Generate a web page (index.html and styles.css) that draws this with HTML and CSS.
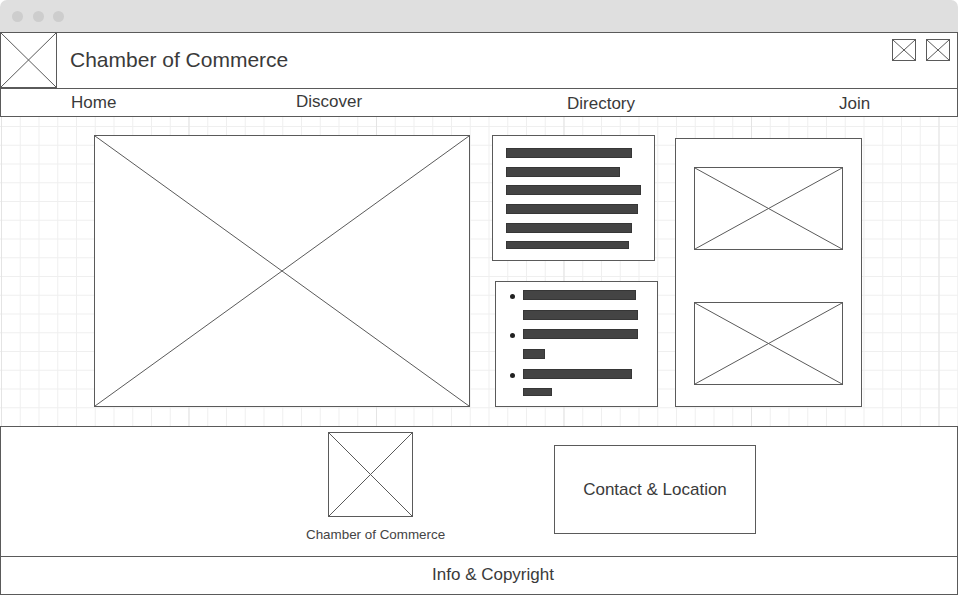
FILE: index.html
```html
<!DOCTYPE html>
<html lang="en">
<head>
    <meta charset="UTF-8">
    <meta name="viewport" content="width=device-width, initial-scale=1.0">
    <link rel="stylesheet" href="styles.css">
    <title>Chamber of Commerce - Wireframe</title>
</head>
<body>
    <div class="window">
        <div class="chrome">
            <span class="dot"></span>
            <span class="dot"></span>
            <span class="dot"></span>
        </div>

        <header class="header">
            <div class="ph-box logo">
                <svg class="ph" viewBox="0 0 100 100" preserveAspectRatio="none"><line x1="0" y1="0" x2="100" y2="100"/><line x1="0" y1="100" x2="100" y2="0"/></svg>
            </div>
            <h1 class="title">Chamber of Commerce</h1>
            <div class="header-icons">
                <div class="ph-box icon">
                    <svg class="ph" viewBox="0 0 100 100" preserveAspectRatio="none"><line x1="0" y1="0" x2="100" y2="100"/><line x1="0" y1="100" x2="100" y2="0"/></svg>
                </div>
                <div class="ph-box icon">
                    <svg class="ph" viewBox="0 0 100 100" preserveAspectRatio="none"><line x1="0" y1="0" x2="100" y2="100"/><line x1="0" y1="100" x2="100" y2="0"/></svg>
                </div>
            </div>
        </header>

        <nav class="nav">
            <a class="nav-item">Home</a>
            <a class="nav-item nav-item--high">Discover</a>
            <a class="nav-item nav-item--low">Directory</a>
            <a class="nav-item nav-item--low">Join</a>
        </nav>

        <main class="main">
            <div class="ph-box hero">
                <svg class="ph" viewBox="0 0 100 100" preserveAspectRatio="none"><line x1="0" y1="0" x2="100" y2="100"/><line x1="0" y1="100" x2="100" y2="0"/></svg>
            </div>

            <div class="middle">
                <div class="card text-card">
                    <span class="bar" style="width: 126px"></span>
                    <span class="bar" style="width: 114px"></span>
                    <span class="bar" style="width: 135px"></span>
                    <span class="bar" style="width: 132px"></span>
                    <span class="bar" style="width: 126px"></span>
                    <span class="bar bar--thin" style="width: 123px"></span>
                </div>

                <ul class="card list-card">
                    <li>
                        <span class="bullet"></span>
                        <div class="lines">
                            <span class="bar" style="width: 113px"></span>
                            <span class="bar" style="width: 115px"></span>
                        </div>
                    </li>
                    <li>
                        <span class="bullet"></span>
                        <div class="lines">
                            <span class="bar" style="width: 115px"></span>
                            <span class="bar" style="width: 22px"></span>
                        </div>
                    </li>
                    <li>
                        <span class="bullet"></span>
                        <div class="lines">
                            <span class="bar" style="width: 109px"></span>
                            <span class="bar bar--thin" style="width: 29px"></span>
                        </div>
                    </li>
                </ul>
            </div>

            <div class="card side">
                <div class="ph-box side-img">
                    <svg class="ph" viewBox="0 0 100 100" preserveAspectRatio="none"><line x1="0" y1="0" x2="100" y2="100"/><line x1="0" y1="100" x2="100" y2="0"/></svg>
                </div>
                <div class="ph-box side-img">
                    <svg class="ph" viewBox="0 0 100 100" preserveAspectRatio="none"><line x1="0" y1="0" x2="100" y2="100"/><line x1="0" y1="100" x2="100" y2="0"/></svg>
                </div>
            </div>
        </main>

        <footer class="footer">
            <div class="footer-brand">
                <div class="ph-box footer-logo">
                    <svg class="ph" viewBox="0 0 100 100" preserveAspectRatio="none"><line x1="0" y1="0" x2="100" y2="100"/><line x1="0" y1="100" x2="100" y2="0"/></svg>
                </div>
                <p class="caption">Chamber of Commerce</p>
            </div>
            <div class="contact">Contact &amp; Location</div>
        </footer>

        <div class="info">Info &amp; Copyright</div>
    </div>
</body>
</html>
```

FILE: styles.css
```css
:root {
    --line: #5a5a5a;
    --text: #3a3a3a;
    --bar: #444;
    --grid: #efefef;
    --grid-major: #e4e4e4;
    --chrome: #dfdfdf;
}

* {
    box-sizing: border-box;
}

body {
    margin: 0;
    font-family: 'Liberation Sans', Arial, sans-serif;
    color: var(--text);
    background-color: white;
}

.window {
    width: 958px;
}

/* browser chrome */
.chrome {
    height: 32px;
    background-color: var(--chrome);
    border-radius: 7px 7px 0 0;
    display: flex;
    align-items: center;
    gap: 9.5px;
    padding-left: 12px;
    padding-top: 1px;
}

.dot {
    width: 11px;
    height: 11px;
    border-radius: 50%;
    background-color: #cdcdcd;
}

/* placeholders */
.ph-box {
    border: 1px solid var(--line);
    background-color: white;
}

.ph {
    display: block;
    width: 100%;
    height: 100%;
}

.ph line {
    stroke: var(--line);
    stroke-width: 1;
    vector-effect: non-scaling-stroke;
}

/* header */
.header {
    height: 57px;
    border: 1px solid var(--line);
    display: flex;
    align-items: center;
}

.logo {
    width: 57px;
    height: 56px;
    margin: -1px 0 -1px -1px;
    align-self: flex-start;
}

.title {
    margin: -1px 0 0 13px;
    font-size: 21px;
    font-weight: normal;
}

.header-icons {
    margin-left: auto;
    align-self: flex-start;
    margin-top: 6px;
    margin-right: 7px;
    display: flex;
    gap: 10px;
}

.icon {
    width: 24px;
    height: 22px;
}

/* nav */
.nav {
    height: 28px;
    border: 1px solid var(--line);
    border-top: none;
    display: grid;
    grid-template-columns: 225px 271px 272px auto;
    align-items: center;
    padding-left: 70px;
}

.nav-item {
    font-size: 17px;
    line-height: 20px;
}

.nav-item--high {
    margin-bottom: 2px;
}

.nav-item--low {
    margin-top: 3px;
}

/* main canvas */
.main {
    height: 309px;
    display: flex;
    align-items: flex-start;
    padding-top: 18px;
    background-color: white;
    background-image:
        linear-gradient(to right, var(--grid-major) 1px, transparent 1px),
        linear-gradient(to right, var(--grid) 1px, transparent 1px),
        linear-gradient(to bottom, var(--grid) 1px, transparent 1px);
    background-size: 187.5px 100%, 18.75px 18.75px, 18.75px 18.75px;
    background-position: 1px 0, 1px 0, 0 9px;
}

.hero {
    width: 376px;
    height: 272px;
    margin-left: 94px;
}

.middle {
    margin-left: 22px;
    display: flex;
    flex-direction: column;
    align-items: flex-start;
    gap: 20px;
}

.card {
    border: 1px solid var(--line);
    background-color: white;
}

.text-card {
    width: 163px;
    height: 126px;
    padding: 12px 0 0 13px;
    display: flex;
    flex-direction: column;
    gap: 8.7px;
}

.bar {
    display: block;
    height: 10px;
    background-color: var(--bar);
    border: 1px solid #363636;
}

.bar--thin {
    height: 8px;
}

.list-card {
    width: 163px;
    height: 126px;
    margin: 0 0 0 3px;
    padding: 8px 0 0 0;
    list-style: none;
    display: flex;
    flex-direction: column;
    gap: 9.7px;
}

.list-card li {
    display: flex;
    align-items: flex-start;
}

.bullet {
    width: 5px;
    height: 5px;
    border-radius: 50%;
    background-color: #222;
    margin: 4px 8.5px 0 13.5px;
}

.lines {
    display: flex;
    flex-direction: column;
    gap: 9.7px;
}

.side {
    width: 187px;
    height: 269px;
    margin: 3px 0 0 17px;
    padding: 28px 0 0 18px;
    display: flex;
    flex-direction: column;
    gap: 52px;
}

.side-img {
    width: 149px;
    height: 83px;
}

/* footer */
.footer {
    height: 131px;
    border: 1px solid var(--line);
    display: flex;
    align-items: flex-start;
}

.footer-brand {
    width: 140px;
    margin-left: 305px;
    padding-top: 5px;
}

.footer-logo {
    width: 85px;
    height: 85px;
    margin-left: 21.5px;
}

.caption {
    margin: 10px 0 0 0;
    font-size: 13.4px;
    line-height: 16px;
    color: #444;
    white-space: nowrap;
}

.contact {
    width: 202px;
    height: 89px;
    margin: 18px 0 0 108px;
    border: 1px solid var(--line);
    display: flex;
    align-items: center;
    justify-content: center;
    font-size: 17px;
}

.info {
    height: 38px;
    border: 1px solid var(--line);
    border-top: none;
    text-align: center;
    padding-left: 28px;
    font-size: 17px;
    line-height: 35px;
}
```
